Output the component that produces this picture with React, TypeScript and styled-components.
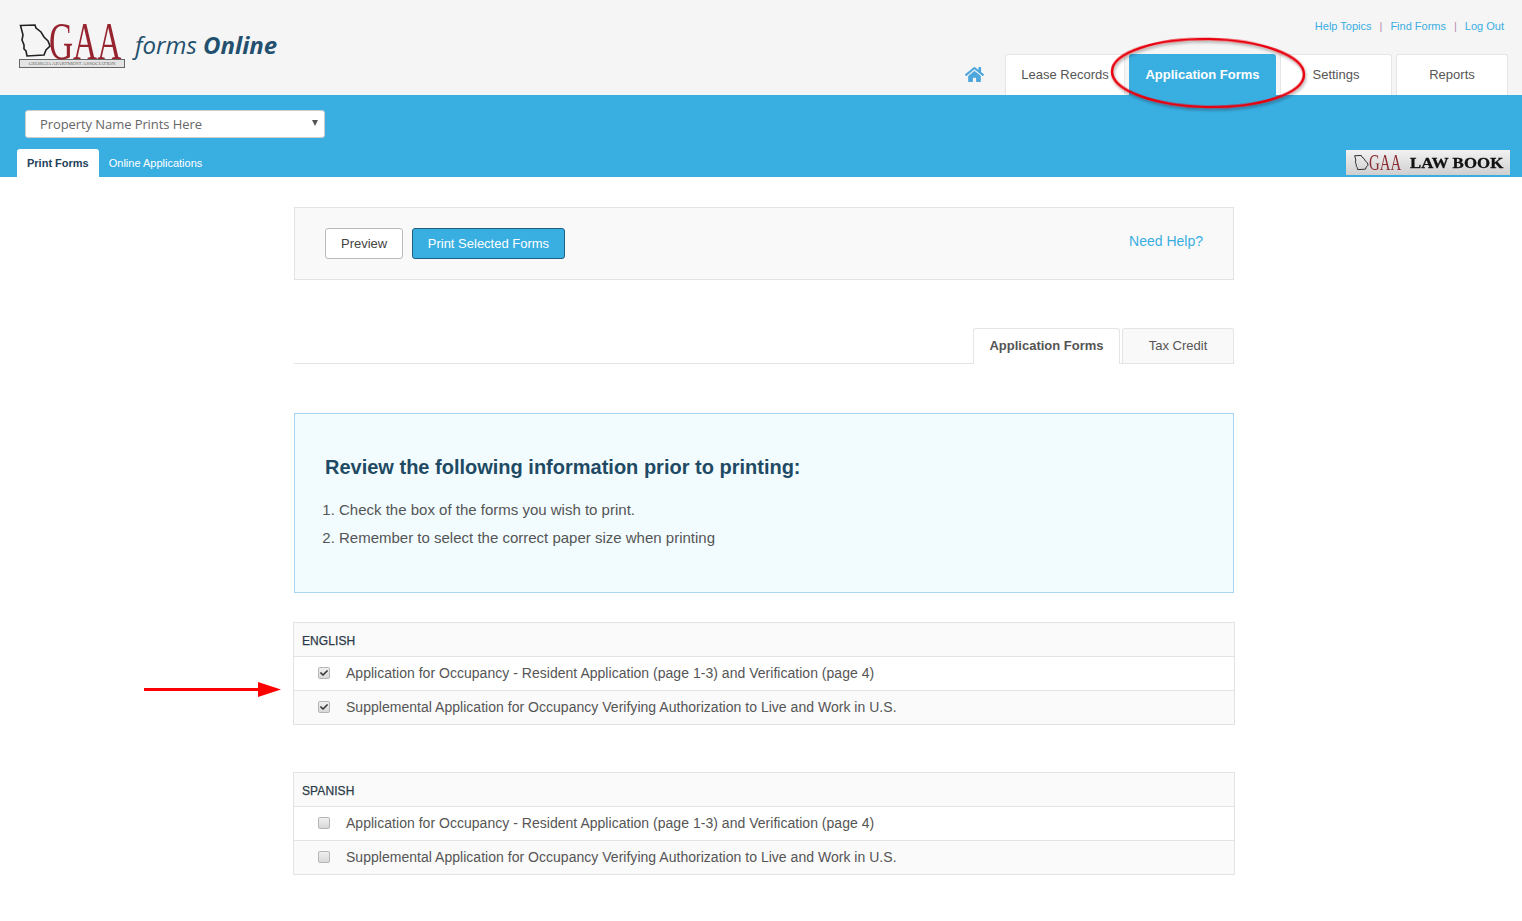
import { createGlobalStyle, styled } from "styled-components";
import { FaCheck, FaHome } from "react-icons/fa";

const blue = "#39aee1";

const GlobalStyle = createGlobalStyle`
  html, body {
    margin: 0;
    padding: 0;
    background: #fff;
    font-family: "Liberation Sans", Arial, sans-serif;
    color: #555;
  }
  * { box-sizing: border-box; }
`;

const Page = styled.div`
  position: relative;
  width: 1522px;
  height: 921px;
  overflow: hidden;
`;

const Header = styled.header`
  display: flex;
  justify-content: space-between;
  height: 95px;
  padding: 0 14px 0 19px;
  background: #f5f5f5;
`;

const Logo = styled.div`
  display: flex;
  align-items: flex-start;
  padding-top: 24px;
`;

const LogoMark = styled.div`
  display: flex;
  flex-direction: column;
  width: 106px;
  height: 44px;
`;

const LogoTop = styled.div`
  display: flex;
  align-items: flex-start;
  height: 35px;
`;

const LogoLetters = styled.span`
  flex: none;
  margin-left: -2px;
  font-family: "Liberation Serif", serif;
  font-size: 53px;
  line-height: 35px;
  color: #96242f;
  transform: scaleX(0.63);
  transform-origin: left center;
`;

const LogoStrip = styled.div`
  height: 9px;
  border: 1px solid #666;
  background: #e4e4e4;
  font-family: "Liberation Serif", serif;
  font-size: 5px;
  line-height: 7px;
  color: #666;
  text-align: center;
  white-space: nowrap;
  overflow: hidden;
`;

const Tagline = styled.div`
  margin: 5px 0 0 10px;
  font-family: "Open Sans", sans-serif;
  font-size: 24px;
  line-height: 32px;
  font-style: italic;
  color: #23506e;
  b { font-weight: 700; }
`;

const HeaderRight = styled.div`
  display: flex;
  flex-direction: column;
  align-items: flex-end;
`;

const TopLinks = styled.nav`
  display: flex;
  align-items: center;
  gap: 8px;
  height: 54px;
  padding: 0 4px 2px 0;
  font-size: 11px;
  color: ${blue};
`;

const TopSep = styled.span`
  color: #b58bb0;
  font-size: 11px;
`;

const NavRow = styled.nav`
  display: flex;
  align-items: stretch;
  gap: 4px;
  height: 41px;
`;

const HomeLink = styled.div`
  display: flex;
  align-items: center;
  padding-right: 17px;
  color: #4da6dc;
  font-size: 19px;
`;

const NavTab = styled.div<{ $w: number; $active?: boolean }>`
  display: flex;
  align-items: center;
  justify-content: center;
  width: ${(p) => p.$w}px;
  padding-bottom: ${(p) => (p.$active ? 1 : 2)}px;
  border: ${(p) => (p.$active ? "none" : "1px solid #e6e6e6")};
  border-bottom: none;
  border-radius: 3px 3px 0 0;
  background: ${(p) => (p.$active ? blue : "#fff")};
  color: ${(p) => (p.$active ? "#fff" : "#555")};
  font-size: 13px;
  font-weight: ${(p) => (p.$active ? 700 : 400)};
`;

const BlueBar = styled.div`
  position: relative;
  height: 82px;
  padding: 15px 0 0 17px;
  background: ${blue};
`;

const PropertySelect = styled.div`
  display: flex;
  align-items: center;
  justify-content: space-between;
  width: 300px;
  height: 28px;
  margin-left: 8px;
  padding: 0 6px 0 14px;
  border: 1px solid #ccc;
  border-radius: 3px;
  background: #fff;
  font-family: "Open Sans", sans-serif;
  font-size: 13px;
  letter-spacing: -0.08px;
  color: #666;
`;

const SelectCaret = styled.span`
  width: 0;
  height: 0;
  margin-bottom: 2px;
  border-left: 3px solid transparent;
  border-right: 3px solid transparent;
  border-top: 6px solid #555;
`;

const SubTabs = styled.div`
  display: flex;
  margin-top: 11px;
`;

const SubTab = styled.div<{ $active?: boolean }>`
  display: flex;
  align-items: center;
  height: 28px;
  padding: 0 10px;
  border-radius: 3px 3px 0 0;
  background: ${(p) => (p.$active ? "#fff" : "transparent")};
  color: ${(p) => (p.$active ? "#22425a" : "#fff")};
  font-size: 11px;
  font-weight: ${(p) => (p.$active ? 700 : 400)};
`;

const LawBook = styled.div`
  position: absolute;
  right: 12px;
  bottom: 2px;
  display: flex;
  align-items: center;
  width: 164px;
  height: 25px;
  padding-left: 8px;
  background: linear-gradient(#f2f2f2, #cfcfcf);
  white-space: nowrap;
`;

const LawGaa = styled.span`
  flex: none;
  width: 36px;
  font-family: "Liberation Serif", serif;
  font-size: 24px;
  line-height: 25px;
  color: #8a2a33;
  transform: scaleX(0.62);
  transform-origin: left center;
`;

const LawWord = styled.span`
  margin: 1px 0 0 5px;
  font-family: "Liberation Serif", serif;
  font-weight: 700;
  font-size: 15px;
  letter-spacing: 0.1px;
  color: #111;
  -webkit-text-stroke: 0.3px #111;
  transform: scaleX(1.12);
  transform-origin: left center;
`;

const Content = styled.main`
  width: 940px;
  margin: 30px 0 0 294px;
`;

const ToolPanel = styled.section`
  display: flex;
  align-items: center;
  justify-content: space-between;
  height: 73px;
  padding: 0 30px;
  border: 1px solid #e3e3e3;
  background: #f9f9f9;
`;

const ButtonRow = styled.div`
  display: flex;
  gap: 9px;
`;

const Button = styled.button<{ $primary?: boolean }>`
  height: 31px;
  padding: 0 ${(p) => (p.$primary ? "14.5px" : "15px")} 1px;
  border: 1px solid ${(p) => (p.$primary ? "#1e5f80" : "#bbb")};
  border-radius: 3px;
  background: ${(p) => (p.$primary ? blue : "#fff")};
  color: ${(p) => (p.$primary ? "#fff" : "#444")};
  font-family: inherit;
  font-size: 13px;
`;

const HelpLink = styled.a`
  margin-bottom: 5px;
  color: ${blue};
  font-size: 14px;
`;

const FormTabs = styled.div`
  display: flex;
  justify-content: flex-end;
  gap: 2px;
  height: 36px;
  margin-top: 48px;
  border-bottom: 1px solid #e5e5e5;
`;

const FormTab = styled.div<{ $w: number; $active?: boolean }>`
  display: flex;
  align-items: center;
  justify-content: center;
  width: ${(p) => p.$w}px;
  height: ${(p) => (p.$active ? 36 : 35)}px;
  padding-bottom: ${(p) => (p.$active ? 3 : 2)}px;
  border: 1px solid #e5e5e5;
  border-bottom: none;
  border-radius: 3px 3px 0 0;
  background: ${(p) => (p.$active ? "#fff" : "#f9f9f9")};
  color: #555;
  font-size: 13px;
  font-weight: ${(p) => (p.$active ? 700 : 400)};
`;

const InfoBox = styled.section`
  height: 180px;
  margin-top: 49px;
  padding: 41px 30px 0;
  border: 1px solid #a9d5f3;
  background: #f2fcff;
`;

const InfoTitle = styled.h2`
  margin: 0;
  font-size: 20px;
  line-height: 24px;
  font-weight: 700;
  color: #1f4a63;
`;

const InfoList = styled.ol`
  margin: 17px 0 0;
  padding-left: 14px;
  font-size: 15px;
  line-height: 28px;
  color: #555;
`;

const FormGroup = styled.section<{ $top: number }>`
  width: 942px;
  margin: ${(p) => p.$top}px 0 0 -1px;
  border: 1px solid #e3e3e3;
  border-bottom-width: 0;
`;

const GroupTitle = styled.div`
  display: flex;
  align-items: center;
  height: 34px;
  padding: 2px 0 0 8px;
  border-bottom: 1px solid #e3e3e3;
  background: #fafafa;
  color: #2b3a47;
  font-size: 12px;
  letter-spacing: 0.1px;
  -webkit-text-stroke: 0.25px #2b3a47;
`;

const FormRow = styled.label<{ $shade?: boolean }>`
  display: flex;
  align-items: center;
  height: 34px;
  padding: 0 0 2px 24px;
  border-bottom: 1px solid #e3e3e3;
  background: ${(p) => (p.$shade ? "#fafafa" : "#fff")};
  color: #555;
  font-size: 14px;
  letter-spacing: 0.025px;
`;

const Checkbox = styled.span`
  display: flex;
  align-items: center;
  justify-content: center;
  width: 12px;
  height: 12px;
  margin-right: 16px;
  border: 1px solid #b5b5b5;
  border-radius: 2px;
  background: linear-gradient(#f0f0f0, #d8d8d8);
  color: #333;
  font-size: 8px;
`;

const Overlay = styled.svg`
  position: absolute;
  left: 0;
  top: 0;
  pointer-events: none;
`;

function GeorgiaShape({ h, stroke }: { h: number; stroke: number }) {
  return (
    <svg width={(h * 32) / 35} height={h} viewBox="0 0 32 35" fill="none" stroke="#222" strokeWidth={stroke} style={{ flex: "none" }}>
      <path d="M1.5 1.5 L16 1 L17 4 L22 8 L25 13 L29 17 L31 22 L27 26 L25 31 L8 32 L7 27 L5 25 L5 21 L3 16 L4 11 L1.5 1.5 Z" />
    </svg>
  );
}

function GroupRows({ title, checked, top }: { title: string; checked?: boolean; top: number }) {
  return (
    <FormGroup $top={top}>
      <GroupTitle>{title}</GroupTitle>
      <FormRow>
        <Checkbox>{checked && <FaCheck />}</Checkbox>
        Application for Occupancy - Resident Application (page 1-3) and Verification (page 4)
      </FormRow>
      <FormRow $shade>
        <Checkbox>{checked && <FaCheck />}</Checkbox>
        Supplemental Application for Occupancy Verifying Authorization to Live and Work in U.S.
      </FormRow>
    </FormGroup>
  );
}

function App() {
  return (
    <Page>
      <GlobalStyle />
      <Header>
        <Logo>
          <LogoMark>
            <LogoTop>
              <GeorgiaShape h={35} stroke={1.6} />
              <LogoLetters>GAA</LogoLetters>
            </LogoTop>
            <LogoStrip>GEORGIA APARTMENT ASSOCIATION</LogoStrip>
          </LogoMark>
          <Tagline>
            forms <b>Online</b>
          </Tagline>
        </Logo>
        <HeaderRight>
          <TopLinks>
            <span>Help Topics</span>
            <TopSep>|</TopSep>
            <span>Find Forms</span>
            <TopSep>|</TopSep>
            <span>Log Out</span>
          </TopLinks>
          <NavRow>
            <HomeLink>
              <FaHome />
            </HomeLink>
            <NavTab $w={120}>Lease Records</NavTab>
            <NavTab $w={147} $active>
              Application Forms
            </NavTab>
            <NavTab $w={112}>Settings</NavTab>
            <NavTab $w={112}>Reports</NavTab>
          </NavRow>
        </HeaderRight>
      </Header>

      <BlueBar>
        <PropertySelect>
          Property Name Prints Here
          <SelectCaret />
        </PropertySelect>
        <SubTabs>
          <SubTab $active>Print Forms</SubTab>
          <SubTab>Online Applications</SubTab>
        </SubTabs>
        <LawBook>
          <GeorgiaShape h={16} stroke={2} />
          <LawGaa>GAA</LawGaa>
          <LawWord>LAW BOOK</LawWord>
        </LawBook>
      </BlueBar>

      <Content>
        <ToolPanel>
          <ButtonRow>
            <Button>Preview</Button>
            <Button $primary>Print Selected Forms</Button>
          </ButtonRow>
          <HelpLink>Need Help?</HelpLink>
        </ToolPanel>

        <FormTabs>
          <FormTab $w={147} $active>
            Application Forms
          </FormTab>
          <FormTab $w={112}>Tax Credit</FormTab>
        </FormTabs>

        <InfoBox>
          <InfoTitle>Review the following information prior to printing:</InfoTitle>
          <InfoList>
            <li>Check the box of the forms you wish to print.</li>
            <li>Remember to select the correct paper size when printing</li>
          </InfoList>
        </InfoBox>

        <GroupRows title="ENGLISH" checked top={29} />
        <GroupRows title="SPANISH" top={47} />
      </Content>

      {/* markup drawn over the screenshot */}
      <Overlay width="1522" height="921" viewBox="0 0 1522 921">
        <defs>
          <filter id="soft" x="-10%" y="-20%" width="120%" height="140%">
            <feDropShadow dx="1" dy="2" stdDeviation="1.5" floodColor="#000" floodOpacity="0.35" />
          </filter>
        </defs>
        <ellipse cx="1208" cy="73" rx="96" ry="34" fill="none" stroke="#e8000f" strokeWidth="2.5" filter="url(#soft)" transform="rotate(1 1208 73)" />
        <path d="M144 688 H258 V682 L281 689.5 L258 697 V691 H144 Z" fill="#f00" />
      </Overlay>
    </Page>
  );
}

export default App;
